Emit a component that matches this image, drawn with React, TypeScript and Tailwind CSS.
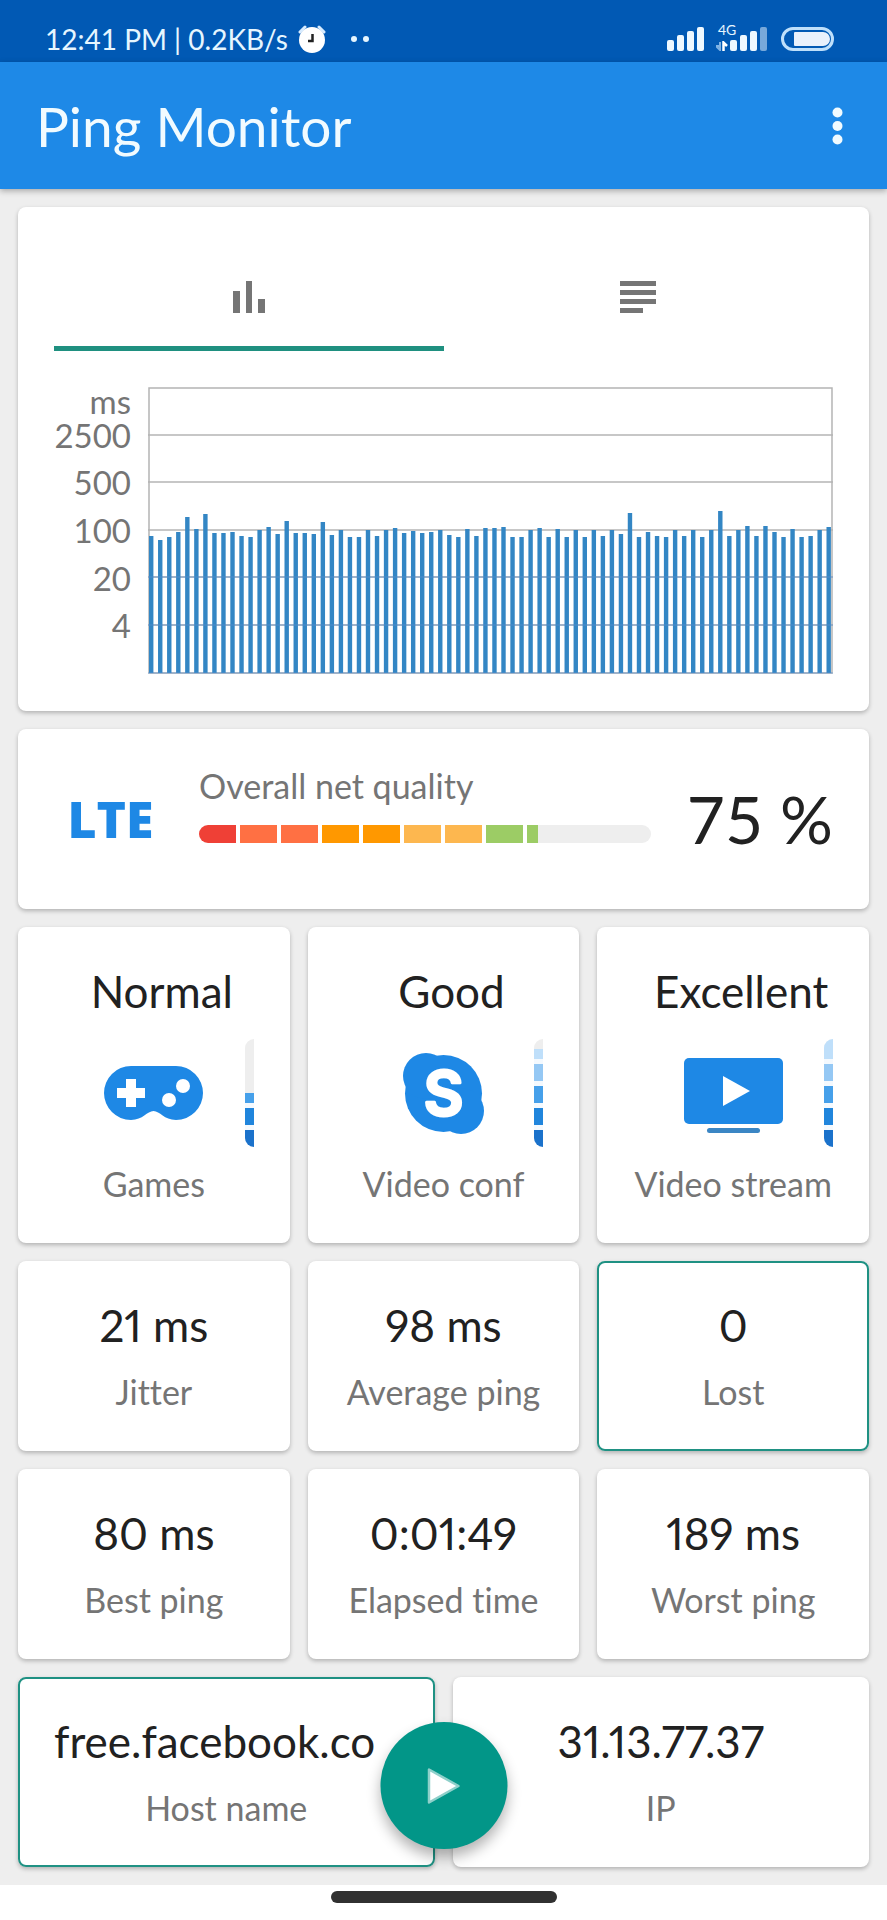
import React from 'react';
import clsx from 'clsx';

// Bar heights in px for the latest pings, oldest first
const pings = [
  137, 133, 136, 141, 156, 144, 159, 140, 140, 141, 137, 136, 143, 146, 139, 152, 140, 140, 139,
  151, 138, 143, 136, 136, 143, 137, 143, 145, 140, 142, 140, 141, 143, 138, 136, 144, 137, 145,
  145, 146, 136, 136, 143, 145, 136, 144, 136, 143, 136, 143, 137, 143, 139, 160, 136, 141, 137,
  136, 143, 137, 143, 136, 143, 162, 137, 143, 147, 137, 147, 141, 136, 144, 136, 137, 143, 146,
];

const scale = ['2500', '500', '100', '20', '4'];

const qualityColors = [
  'bg-[#ef4036]',
  'bg-[#ff7043]',
  'bg-[#ff7043]',
  'bg-[#ff9800]',
  'bg-[#ff9800]',
  'bg-[#fdb74f]',
  'bg-[#fdb74f]',
  'bg-[#9ccc65]',
];

const Card: React.FC<{ className?: string; selected?: boolean; children: React.ReactNode }> = ({
  className,
  selected,
  children,
}) => (
  <div
    className={clsx(
      'min-w-0 rounded-lg bg-white px-9 shadow-[0_2px_4px_rgba(0,0,0,0.25)]',
      selected && 'outline-2 -outline-offset-2 outline-[#1f9183]',
      className
    )}
  >
    {children}
  </div>
);

const Stat: React.FC<{ value: string; label: string; selected?: boolean; clip?: boolean }> = ({
  value,
  label,
  selected,
  clip,
}) => (
  <Card selected={selected} className="py-9 text-center">
    <div
      className={clsx(
        'mb-4 overflow-hidden whitespace-nowrap text-[44px] leading-[56px] text-[#212121] proportional-nums',
        clip && 'text-left'
      )}
    >
      {value}
    </div>
    <div className="-mx-4 whitespace-nowrap text-[34px] leading-[46px] text-[#757575]">{label}</div>
  </Card>
);

// Vertical gauge, filled from the bottom up
const levelFills = ['#1b72cb', '#2085dc', '#46a0ea', '#95c8f4', '#bfdffa'];

const Level: React.FC<{ value: number }> = ({ value }) => (
  <svg className="h-[108px] w-[9px] justify-self-end" viewBox="0 0 9 108">
    <defs>
      <clipPath id="level">
        <path d="M9 0A9 9 0 0 0 0 9V99A9 9 0 0 0 9 108Z" />
      </clipPath>
    </defs>
    <g clipPath="url(#level)">
      <rect width="9" height="108" fill="#eeeeee" />
      <rect y={108 - value} width="9" height={value} fill="#f4f9fe" />
      {levelFills.map((fill, i) => {
        const height = Math.max(0, Math.min(i === 4 ? 20 : 17, value - i * 22));
        return <rect key={fill} y={108 - i * 22 - height} width="9" height={height} fill={fill} />;
      })}
    </g>
  </svg>
);

const Activity: React.FC<{
  rating: string;
  label: string;
  level: number;
  children: React.ReactNode;
}> = ({ rating, label, level, children }) => (
  <Card className="py-9 text-center">
    <div className="whitespace-nowrap pl-4 text-[44px] leading-[56px] text-[#212121]">{rating}</div>
    <div className="mb-3.5 mt-5 grid h-[108px] grid-cols-[1fr_auto_1fr] items-center text-[#1e88e5]">
      <span />
      {children}
      <Level value={level} />
    </div>
    <div className="-mx-4 whitespace-nowrap text-[34px] leading-[46px] text-[#757575]">{label}</div>
  </Card>
);

const Signal: React.FC<{ weak?: boolean }> = ({ weak }) => (
  <svg className="h-6 w-[37px]" viewBox="0 0 37 24" fill="#eef8ff">
    <rect x="0" y="13" width="7" height="11" rx="2" />
    <rect x="10" y="8" width="7" height="16" rx="2" />
    <rect x="20" y="4" width="7" height="20" rx="2" />
    <rect x="30" y="0" width="7" height="24" rx="2" opacity={weak ? 0.5 : 1} />
  </svg>
);

const StatusBar: React.FC = () => (
  <div className="flex h-[62px] items-center bg-[#0159b4] pl-[45px] pr-[53px] pt-4 text-[#e6f6ff]">
    <span className="text-[28px] leading-[46px]">12:41 PM | 0.2KB/s</span>
    <svg className="ml-2.5 h-7 w-7" viewBox="0 0 28 28">
      <path d="M2 7L7 2M26 7L21 2" stroke="#d6ebff" strokeWidth="3" strokeLinecap="round" />
      <circle cx="14" cy="15" r="13" fill="#fff" />
      <path d="M14.500 9V16H10" fill="none" stroke="#222" strokeWidth="2.500" />
    </svg>
    <svg className="ml-6 h-2 w-5" viewBox="0 0 20 8" fill="currentColor">
      <circle cx="4" cy="4" r="3" />
      <circle cx="16" cy="4" r="3" />
    </svg>
    <div className="ml-auto flex items-center">
      <Signal />
      <div className="relative ml-3 mr-0.5 h-7 w-3">
        <span className="absolute -top-0.5 left-0.5 text-[14px] leading-[14px]">4G</span>
        <svg className="absolute bottom-0.5 left-0 h-[10px] w-3" viewBox="0 0 12 10">
          <path d="M4 1V9L0 5M4 5H0" fill="none" stroke="#7fb2e4" strokeWidth="2" />
          <path d="M7.500 10V1.500L11 5" fill="none" stroke="#fff" strokeWidth="2.500" />
        </svg>
      </div>
      <Signal weak />
      <svg className="ml-3.5 h-6 w-[53px]" viewBox="0 0 53 24">
        <rect x="1.500" y="1.500" width="50" height="21" rx="10.500" fill="none" stroke="#bfe0fb" strokeWidth="3" />
        <path d="M14 5H42A7 7 0 0 1 42 19H14A1 1 0 0 1 13 18V6A1 1 0 0 1 14 5Z" fill="#e9f1fc" />
      </svg>
    </div>
  </div>
);

const Chart: React.FC = () => (
  <div className="mt-9 flex">
    <div className="w-[77px] text-right text-[33px] leading-[28px] text-[#757575]">
      <div className="h-6">ms</div>
      <div className="grid h-[238px] grid-rows-5 items-center">
        {scale.map((mark) => (
          <span key={mark}>{mark}</span>
        ))}
      </div>
    </div>
    <svg
      className="ml-[17px] h-[287px] min-w-0 flex-1"
      viewBox="0 0 684 287"
      preserveAspectRatio="none"
    >
      <g stroke="#b4b4b4" strokeWidth="1.500">
        {[48, 95, 143, 190, 238].map((y) => (
          <path key={y} d={`M0 ${y}H684`} />
        ))}
      </g>
      <rect x="1" y="1" width="682" height="285" fill="none" stroke="#b4b4b4" strokeWidth="1.500" />
      {pings.map((height, i) => (
        <rect
          key={i}
          x={1 + i * 9.02}
          y={286 - height}
          width="4.400"
          height={height}
          fill="#3386c4"
        />
      ))}
      <g stroke="#5b8fd0" strokeWidth="1" opacity="0.7">
        <path d="M0 190H684M0 238H684M0 286H684" />
      </g>
    </svg>
  </div>
);

const App: React.FC = () => {
  return (
    <div className="bg-[#eeeeee] font-['Lato','Noto_Sans',sans-serif] [font-variant-ligatures:none]">
      <StatusBar />

      <header className="flex h-[127px] items-center justify-between bg-[#1e89e7] px-9 text-[#f1fbff] shadow-[0_2px_6px_rgba(0,0,0,0.3)]">
        <h1 className="text-[55px] leading-[64px]">Ping Monitor</h1>
        <button type="button" aria-label="More options" className="p-2">
          <svg className="h-[38px] w-[11px]" viewBox="0 0 11 38" fill="currentColor">
            <circle cx="5.500" cy="5.500" r="5" />
            <circle cx="5.500" cy="19" r="5" />
            <circle cx="5.500" cy="32.500" r="5" />
          </svg>
        </button>
      </header>

      <main className="relative flex flex-col gap-[18px] p-[18px]">
        {/* Graph / log tabs */}
        <Card className="h-[504px] pt-9">
          <div className="grid grid-cols-2" role="tablist">
            <button
              type="button"
              role="tab"
              aria-selected="true"
              aria-label="Graph"
              className="flex h-[108px] items-center justify-center border-b-[5px] border-[#1f9080] pt-1"
            >
              <svg className="h-8 w-8" viewBox="0 0 32 32" fill="#757575">
                <path d="M0 10H7V32H0ZM13 0H19V32H13ZM25 18H32V32H25Z" />
              </svg>
            </button>
            <button
              type="button"
              role="tab"
              aria-selected="false"
              aria-label="Log"
              className="flex h-[108px] items-center justify-center"
            >
              <svg className="h-8 w-9" viewBox="0 0 36 32" fill="#757575">
                <path d="M0 0H36V5H0ZM0 9H36V14H0ZM0 18H36V23H0ZM0 27H23V32H0Z" />
              </svg>
            </button>
          </div>
          <Chart />
        </Card>

        {/* Overall quality */}
        <Card className="flex h-[180px] items-center">
          <span className="w-[109px] pl-1 text-center font-['Open_Sans',sans-serif] text-[50px] font-extrabold leading-[60px] text-[#1e88e5]">
            LTE
          </span>
          <div className="ml-9 min-w-0 flex-1 pb-8">
            <div className="text-[34px] leading-[46px] text-[#757575]">Overall net quality</div>
            <div className="mt-4 flex h-[18px] gap-1 overflow-hidden rounded-full bg-[#eeeeee]">
              <div className="flex w-3/4 gap-1 bg-white">
                {qualityColors.map((color, i) => (
                  <span key={i} className={clsx('w-[37px] shrink-0', color)} />
                ))}
                <span className="flex-1 bg-[#9ccc65]" />
              </div>
            </div>
          </div>
          <span className="ml-9 whitespace-nowrap text-[66px] leading-[80px] text-[#212121]">75 %</span>
        </Card>

        <section className="grid grid-cols-3 gap-[18px]">
          <Activity rating="Normal" label="Games" level={54}>
            <svg className="h-[54px] w-[99px]" viewBox="0 0 99 54">
              <path
                d="M27 0H72A27 27 0 0 1 72 54C60 54 56 45 49.500 45C43 45 39 54 27 54A27 27 0 0 1 27 0Z"
                fill="currentColor"
              />
              <path d="M22 13H32V22H41V32H32V41H22V32H13V22H22Z" fill="#fff" />
              <circle cx="79" cy="20" r="7" fill="#fff" />
              <circle cx="65" cy="34" r="7" fill="#fff" />
            </svg>
          </Activity>
          <Activity rating="Good" label="Video conf" level={98}>
            <svg className="size-[81px]" viewBox="0 0 81 81">
              <g fill="currentColor">
                <circle cx="40.500" cy="40.500" r="38.500" />
                <circle cx="23" cy="23" r="23" />
                <circle cx="58" cy="58" r="23" />
              </g>
              <text
                x="40.500"
                y="62"
                textAnchor="middle"
                className="font-['Inter',sans-serif] text-[61px] font-semibold"
                fill="#fff"
                stroke="#fff"
                strokeWidth="3"
                strokeLinejoin="round"
              >
                S
              </text>
            </svg>
          </Activity>
          <Activity rating="Excellent" label="Video stream" level={108}>
            <svg className="h-20 w-[99px]" viewBox="0 0 99 80">
              <rect y="5" width="99" height="66" rx="5" fill="currentColor" />
              <rect x="23" y="75" width="53" height="5" rx="2.500" fill="#3b86c4" />
              <path d="M39 23V53L66 38Z" fill="#fff" />
            </svg>
          </Activity>
        </section>

        <section className="grid grid-cols-3 gap-[18px]">
          <Stat value="21 ms" label="Jitter" />
          <Stat value="98 ms" label="Average ping" />
          <Stat value="0" label="Lost" selected />
          <Stat value="80 ms" label="Best ping" />
          <Stat value="0:01:49" label="Elapsed time" />
          <Stat value="189 ms" label="Worst ping" />
        </section>

        <section className="grid grid-cols-2 gap-[18px]">
          <Stat value="free.facebook.co" label="Host name" selected clip />
          <Stat value="31.13.77.37" label="IP" />
        </section>

        <button
          type="button"
          aria-label="Start"
          className="absolute bottom-9 left-1/2 flex size-[127px] -translate-x-1/2 items-center justify-center rounded-full bg-[#029688] shadow-[0_8px_14px_rgba(0,0,0,0.3)]"
        >
          <svg className="h-10 w-9" viewBox="0 0 36 40">
            <path
              d="M3.500 3.500V36.500L33 20Z"
              fill="#fff"
              stroke="#8fd0ca"
              strokeWidth="2.500"
              strokeLinejoin="round"
            />
          </svg>
        </button>
      </main>

      <div className="flex h-[35px] justify-center bg-white pt-1.5">
        <div className="h-3 w-[226px] rounded-full bg-[#313131]" />
      </div>
    </div>
  );
};

export default App;
